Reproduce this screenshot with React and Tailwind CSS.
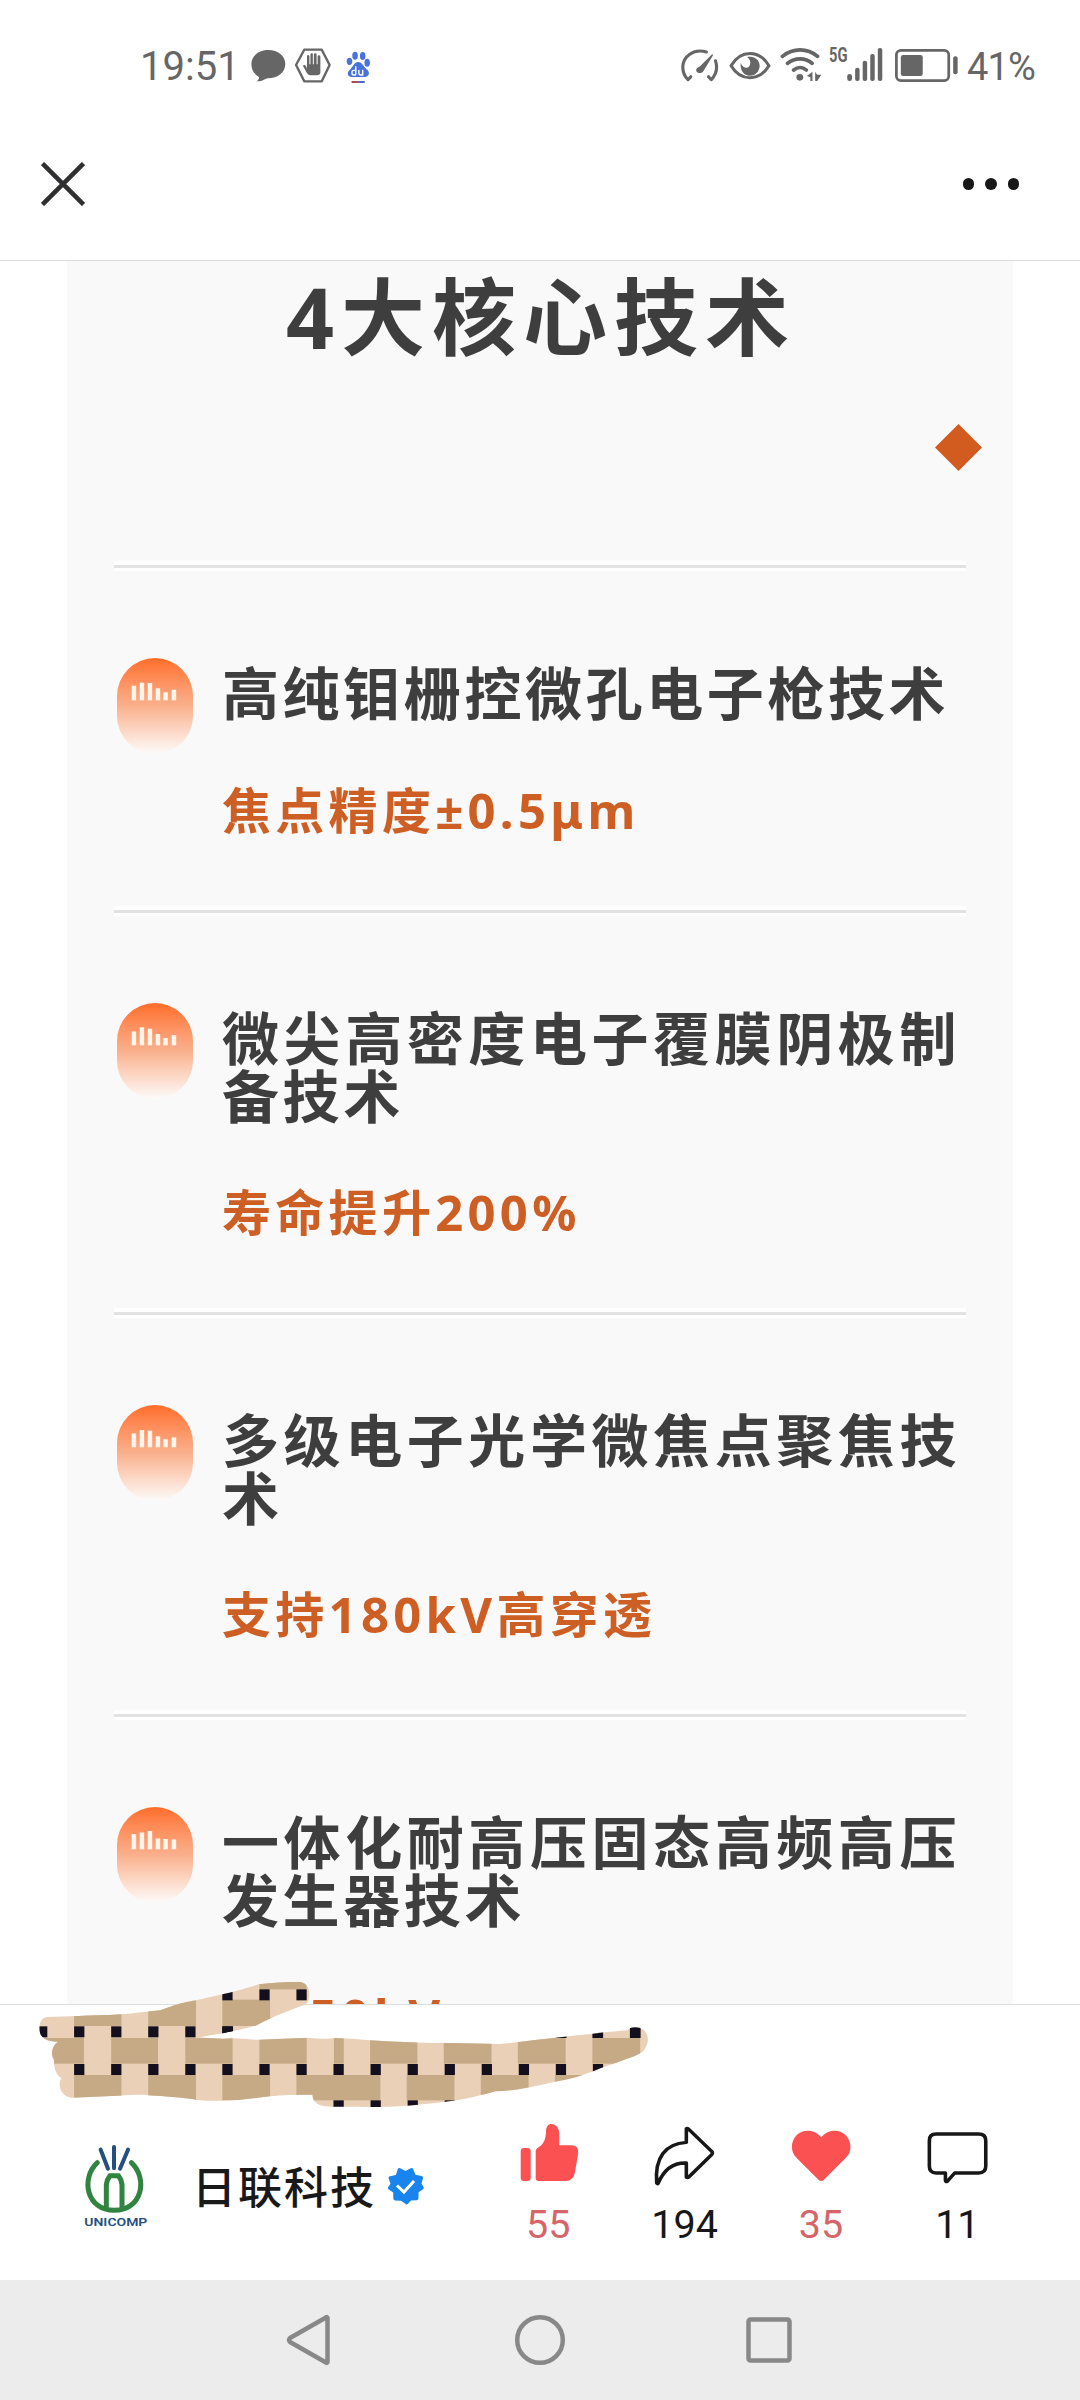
const techs = [
  {
    title: "高纯钼栅控微孔电子枪技术",
    note: "焦点精度±0.5μm",
    bars: [27.7, 24.7, 25, 30.3, 34.3, 31.7],
  },
  {
    title: "微尖高密度电子覆膜阴极制备技术",
    note: "寿命提升200%",
    bars: [28.5, 24.3, 25.7, 31, 35, 32],
  },
  {
    title: "多级电子光学微焦点聚焦技术",
    note: "支持180kV高穿透",
    bars: [28.3, 25, 25.7, 31.3, 34.3, 32.3],
  },
  {
    title: "一体化耐高压固态高频高压发生器技术",
    note: "50kV",
    indent: true,
    bars: [27, 25.5, 24, 31.5, 32, 32.5],
  },
];

const barX = [14.7, 22.7, 30.7, 38.7, 46.3, 54.7];

const StatusBar = () => (
  <div className="flex h-[130px] shrink-0 items-center justify-between pr-[43px] pl-[140px] text-[#666]">
    <div className="flex items-center">
      <span className="w-[110px] pt-[3px] font-['Roboto','Noto_Sans',sans-serif] text-[40px] leading-[40px] whitespace-nowrap">
        19:51
      </span>
      <svg className="h-10 w-[36px]" viewBox="725 135 105 120" preserveAspectRatio="none" fill="currentColor">
        <path d="M778 150c29 0 50 18 50 42 0 25-22 43-50 43-6 0-12 5-20 8-5 1-10 1-14 1 6-4 8-8 7-13-13-8-22-21-22-39 0-24 21-42 49-42z" />
      </svg>
      <svg className="ml-[9px] h-10 w-[36px]" viewBox="855 135 105 120" preserveAspectRatio="none">
        <path d="M882 149h51l23 46-23 49h-51l-24-49z" fill="none" stroke="currentColor" strokeWidth="7" strokeLinejoin="round" />
        <path
          d="M890 206v-37q0-4 3-4t4 4v24h3v-29q0-4 4-4t3 4v29h3v-29q0-4 4-4t4 4v29h3v-23q0-4 4-4t4 4v47q0 9-10 9h-19q-6 0-10-6l-12-23q4-5 9 1z"
          fill="currentColor"
        />
      </svg>
      <svg className="ml-[14px] h-10 w-[26px]" viewBox="1000 135 75 120" preserveAspectRatio="none">
        <g fill="#4a72dc">
          <ellipse cx="1013" cy="184" rx="8" ry="11" />
          <ellipse cx="1029" cy="167" rx="8" ry="12" />
          <ellipse cx="1051" cy="168" rx="8" ry="12" />
          <ellipse cx="1064" cy="188" rx="8" ry="12" />
          <path d="M1038 186c12 0 16 15 27 24 8 9 3 21-8 21h-38c-11 0-15-12-6-21 10-8 13-24 25-24z" />
        </g>
        <path d="M1031 199v26M1031 211h-6q-5 0-5 7t5 7h6M1040 210v10q0 5 5 5h6v-16" fill="none" stroke="#fff" strokeWidth="4" />
        <path d="M1019 246h20" stroke="#b04a52" strokeWidth="6" />
        <path d="M1038 246h19" stroke="#4a6cc0" strokeWidth="6" />
      </svg>
    </div>

    <div className="flex items-center">
      <svg className="h-10 w-[40px]" viewBox="405 135 115 120" preserveAspectRatio="none" fill="none" stroke="currentColor">
        <g strokeWidth="9" strokeLinecap="round" strokeLinejoin="round">
          <path d="M481 156C443 145 414 170 413 201c0 15 5 28 15 38l8-9" />
          <path d="M507 182c6 20 2 42-12 57l-8-9" />
        </g>
        <path d="M498 162l2 4-27 46c-4 9-18 10-21 1-2-7 4-12 9-13z" fill="currentColor" stroke="none" />
      </svg>
      <svg className="ml-[9px] h-10 w-[42px]" viewBox="548 135 122 120" preserveAspectRatio="none">
        <path d="M554 197c28-49 82-49 110 0-28 48-82 48-110 0z" fill="none" stroke="currentColor" strokeWidth="9" strokeLinejoin="round" />
        <path d="M601 171c22-5 36 10 36 26s-12 30-28 30c-17 0-30-16-27-39 5 15 17 19 24 12 6-6 6-20-5-29z" fill="currentColor" />
      </svg>
      <svg className="ml-[9px] h-10 w-[42px]" viewBox="695 135 123 120" preserveAspectRatio="none" fill="none" stroke="currentColor" strokeLinecap="round">
        <path d="M702 169c31-26 73-26 103 0M717 190c22-18 52-18 72 0M735 210c12-10 26-10 37 0" strokeWidth="11" />
        <circle cx="753" cy="232" r="10" fill="currentColor" stroke="none" />
        <path d="M774 228l16-13v28h-6v-11zM798 243v-28l6 9h12l-12 19z" fill="currentColor" stroke="none" />
      </svg>
      <div className="relative ml-[7px] h-10 w-[55px]">
        <span className="absolute -top-px left-0 origin-left scale-x-70 font-['Roboto',sans-serif] text-[21px] leading-[22px] font-bold">
          5G
        </span>
        <svg className="h-10 w-[55px]" viewBox="838 135 160 120" preserveAspectRatio="none" fill="currentColor">
          <rect x="891" y="222" width="14" height="21" rx="7" />
          <rect x="914" y="203" width="13" height="40" rx="6" />
          <rect x="936" y="182" width="13" height="61" rx="6" />
          <rect x="958" y="162" width="13" height="81" rx="6" />
          <rect x="980" y="144" width="13" height="99" rx="6" />
        </svg>
      </div>
      <svg className="ml-[10px] h-10 w-[65px]" viewBox="1028 135 190 120" preserveAspectRatio="none">
        <rect x="1035" y="151" width="153" height="91" rx="13" fill="none" stroke="currentColor" strokeWidth="8" />
        <rect x="1048" y="165" width="64" height="63" rx="7" fill="currentColor" />
        <rect x="1201" y="169" width="13" height="54" rx="6" fill="currentColor" />
      </svg>
      <span className="ml-[8px] w-[70px] pt-[3px] font-['Roboto','Noto_Sans',sans-serif] text-[38px] leading-[40px] tracking-[-0.8px] whitespace-nowrap">
        41%
      </span>
    </div>
  </div>
);

const TitleBar = () => (
  <div className="flex h-[130px] shrink-0 items-start justify-between pt-8 pr-[61px] pl-[41px]">
    <svg className="size-11" viewBox="0 0 44 44" stroke="#2f2f31" strokeWidth="4.5">
      <path d="M1.5 1.5l41 41M42.5 1.5l-41 41" />
    </svg>
    <div className="flex h-11 items-center gap-[11px]">
      <i className="size-[11.5px] rounded-full bg-[#181818]" />
      <i className="size-[11.5px] rounded-full bg-[#181818]" />
      <i className="size-[11.5px] rounded-full bg-[#181818]" />
    </div>
  </div>
);

const Badge = ({ bars }) => (
  <div className="h-24 w-[76px] shrink-0 rounded-[38px] bg-linear-to-b from-[#ff6d24] via-[#f9b08c] to-[#fcfbfa]">
    <svg className="h-24 w-[76px]" viewBox="0 0 76 96" fill="#fff5ea">
      {bars.map((top, i) => (
        <rect key={i} x={barX[i]} y={top} width="4.5" height={42.3 - top} />
      ))}
    </svg>
  </div>
);

const TechItem = ({ tech }) => (
  <section>
    <div className="flex h-2.5 flex-col justify-center bg-white">
      <div className="h-[3px] bg-[#e2e2e2]" />
    </div>
    <div className="flex pt-[87px] pb-[71px] pl-[3px]">
      <Badge bars={tech.bars} />
      <div className="ml-[29px] w-[738px] pt-1.5">
        <h2 className="min-h-[59px] text-justify text-[57px] leading-[58px] font-bold tracking-[3.6px] text-[#3e3e3e]">
          {tech.title}
        </h2>
        <p
          className={`mt-[62px] h-[50px] text-[49px] leading-[50px] font-bold tracking-[4.3px] whitespace-nowrap text-[#cd5e24] ${
            tech.indent ? "pl-[87px]" : ""
          }`}
        >
          {tech.note}
        </p>
      </div>
    </div>
  </section>
);

// [x, y, width, height] of the tan weave, everything else inside the stroke stays light
const tan = [
  [581, 50, 106, 38],
  [166, 119, 106, 79],
  [332, 119, 107, 79],
  [498, 119, 107, 79],
  [83, 234, 105, 77],
  [249, 234, 105, 77],
  [415, 234, 106, 77],
  [581, 234, 106, 77],
  [748, 234, 22, 77],
  [829, 234, 106, 77],
  [994, 234, 107, 77],
  [1160, 234, 107, 77],
  [1327, 234, 107, 77],
  [166, 345, 106, 76],
  [332, 345, 107, 76],
  [498, 345, 107, 76],
  [664, 345, 188, 76],
  [911, 345, 107, 76],
  [1077, 345, 107, 76],
  [1243, 345, 107, 76],
];
const squareRows = [
  { y: 88, from: 4, to: 6 },
  { y: 199, from: -1, to: 4 },
  { y: 312, from: 0, to: 14 },
  { y: 421, from: 7, to: 10 },
];

const Doodle = () => (
  <svg className="absolute top-[1960px] left-0 h-[170px] w-[700px]" viewBox="0 0 1568 510" preserveAspectRatio="none">
    <clipPath id="doodle">
      <path d="M105 171L160 169C200 165 270 166 300 159L358 151C380 143 395 130 440 121L498 103C540 90 555 82 580 73C610 67 640 66 670 65C685 68 692 80 693 100C693 120 690 130 680 136C650 150 620 165 575 196C540 210 490 222 447 232C470 235 500 238 520 235C550 236 560 240 580 239L690 233C700 235 740 238 750 234L790 236C850 244 930 248 1010 249L1120 252C1170 245 1220 236 1265 230C1320 222 1370 215 1405 211C1410 200 1430 198 1440 208C1455 225 1455 250 1440 275C1420 292 1390 302 1345 325C1300 350 1270 360 1243 365C1190 382 1150 392 1110 394C1060 412 1030 422 980 428C900 440 860 442 800 440L745 440C715 440 700 430 700 404C660 404 630 405 605 409C560 416 530 422 498 422C460 424 440 420 430 417C390 411 350 407 332 406C300 402 280 407 250 408L160 413C135 410 128 370 138 355C125 345 120 320 121 300C112 280 118 255 130 245C100 245 88 230 88 205C88 185 95 173 105 171Z" />
    </clipPath>
    <g clipPath="url(#doodle)">
      <rect width="1568" height="510" fill="#ead0b7" />
      {tan.map(([x, y, w, h]) => (
        <rect key={`${x}-${y}`} x={x} y={y} width={w} height={h} fill="#c5aa85" />
      ))}
      {squareRows.map(({ y, from, to }) =>
        Array.from({ length: to - from + 1 }, (_, i) => (
          <rect key={`${y}-${i}`} x={166 + (from + i) * 83} y={y} width="23" height="33" fill="#130f1c" />
        ))
      )}
      <rect x="498" y="199" width="24" height="35" fill="#130f1c" />
      <rect x="1245" y="199" width="24" height="35" fill="#130f1c" />
      <rect x="1411" y="199" width="24" height="35" fill="#130f1c" />
      <rect x="1327" y="199" width="24" height="35" fill="#130f1c" />
    </g>
  </svg>
);

const Logo = () => (
  <svg className="h-[85px] w-[65px]" viewBox="130 95 195 255" fill="none" strokeLinecap="round">
    <path d="M183 115l22 57M223 107v64M265 115l-24 57" stroke="#24507f" strokeWidth="12" />
    <path d="M173 154c-50 46-34 143 51 143s101-97 51-143" stroke="#31843f" strokeWidth="15" />
    <path d="M200 290v-70q2-16 11-27h25q9 11 11 27v70" stroke="#31843f" strokeWidth="15" strokeLinecap="butt" />
    <text x="134" y="343" textLength="189" lengthAdjust="spacingAndGlyphs" fill="#24507f" fontSize="34" fontWeight="600" fontFamily="Roboto, sans-serif">
      UNICOMP
    </text>
  </svg>
);

const actions = [
  {
    count: "55",
    color: "text-[#d4666a]",
    box: "0 60 382 204",
    icon: (
      <g fill="#fb5152">
        <rect x="114" y="144" width="28" height="99" rx="9" />
        <path d="M156 153q0-6 6-10c15-8 22-22 23-49 0-14 6-22 15-22 13 0 22 13 22 29v35h36q19 2 17 24l-9 57q-4 24-23 26h-79q-8 0-8-8z" />
      </g>
    ),
  },
  {
    count: "194",
    color: "text-[#171717]",
    box: "382 60 382 204",
    icon: (
      <path
        d="M579 86q4-2 7 2l64 66q4 5 0 10l-64 67q-3 3-7 1v-43c-44-2-66 28-79 61q-2 3-4-1c-6-78 25-118 83-122z"
        fill="none"
        stroke="#171717"
        strokeWidth="10"
        strokeLinejoin="round"
      />
    ),
  },
  {
    count: "35",
    color: "text-[#d4666a]",
    box: "764 60 382 204",
    icon: (
      <path d="M955 112c10-13 22-20 37-20 27 0 45 22 45 49 0 14-5 24-14 34l-61 65q-7 6-14 0l-61-65c-9-10-14-20-14-34 0-27 18-49 45-49 15 0 27 7 37 20z" fill="#fb5152" />
    ),
  },
  {
    count: "11",
    color: "text-[#171717]",
    box: "1146 60 382 204",
    icon: (
      <path
        d="M1278 102h119q20 0 20 20v77q0 20-20 20h-67l-21 25q-5 2-5-4v-21h-26q-19 0-19-20v-77q0-20 19-20z"
        fill="none"
        stroke="#171717"
        strokeWidth="10"
        strokeLinejoin="round"
      />
    ),
  },
];

const Footer = () => (
  <footer className="flex h-[276px] shrink-0 items-start border-t border-[#dedede] bg-white pl-[83px]">
    <div className="mt-[137px] flex h-[86px] w-[397px] items-center">
      <Logo />
      <span className="ml-[44px] w-[187px] font-['Noto_Sans_CJK_SC',sans-serif] text-[44px] leading-[44px] font-medium tracking-[2px] whitespace-nowrap text-[#191919]">
        日联科技
      </span>
      <svg className="mt-0.5 ml-[8px] h-[38px] w-[37px]" viewBox="0 0 37 38">
        <path
          d="M11 1.5q1-1 2.3-.2l5.2 2.7 5.2-2.7q1.3-.8 2.3.4l2.5 6 6 1.3q1.7.5 1.6 2l-1.6 5.5 2 3.5q.7 1.3-.5 2.3l-4.4 3-.1 6q0 1.6-1.6 2l-5.9.3-3.3 3.3q-1.3 1-2.3-.1l-4.4-3-6-.3q-1.7-.3-1.7-2l-.1-6-4.4-3q-1.4-1-.7-2.3l2.4-3.5-1.9-5.5q-.3-1.6 1.3-2l6-1.3z"
          fill="#1a84ee"
        />
        <path d="M10 18.5l7 6.5 10-11" fill="none" stroke="#fff" strokeWidth="3" />
      </svg>
    </div>
    {actions.map((action) => (
      <div key={action.count} className="mt-[115px] flex w-[136.4px] flex-col items-center">
        <svg className="h-[68px] w-full" viewBox={action.box} preserveAspectRatio="none">
          {action.icon}
        </svg>
        <span
          className={`mt-[17px] font-['Roboto','Noto_Sans',sans-serif] text-[39.5px] leading-[40px] ${action.color}`}
        >
          {action.count}
        </span>
      </div>
    ))}
  </footer>
);

const NavBar = () => (
  <nav className="flex h-[120px] shrink-0 items-center bg-[#ececec] pl-[286px]">
    <svg className="h-[52px] w-[46px]" viewBox="0 0 46 52" fill="none" stroke="#888" strokeWidth="4.5" strokeLinejoin="round">
      <path d="M41.5 4v44q-.5 1.5-1.5.5l-36-20.5q-2-2 0-4l36-20.5q1-1 1.5.5z" />
    </svg>
    <svg className="ml-[182px] h-[52px] w-[52px]" viewBox="0 0 52 52" fill="none" stroke="#888" strokeWidth="4.5">
      <circle cx="26" cy="26" r="22.8" />
    </svg>
    <svg className="ml-[179px] h-[48px] w-[48px]" viewBox="0 0 48 48" fill="none" stroke="#888" strokeWidth="4.5">
      <rect x="3.5" y="3.5" width="41" height="41" rx="2" />
    </svg>
  </nav>
);

export default function App() {
  return (
    <div
      lang="zh-CN"
      className="relative flex h-[2400px] w-[1080px] flex-col overflow-hidden bg-white font-['Noto_Sans','Noto_Sans_CJK_SC',sans-serif]"
    >
      <StatusBar />
      <TitleBar />
      <main className="h-[1744px] shrink-0 overflow-hidden border-t border-[#dedede]">
        <div className="ml-[67px] flex w-[946px] flex-col bg-[#f9f9f9] pt-3.5">
          <h1 className="pl-0.5 text-center text-[84px] leading-[84px] font-bold tracking-[7px] text-[#3e3e3e]">
            4大核心技术
          </h1>
          <svg className="mt-[65px] mr-[31px] size-[47px] self-end" viewBox="0 0 47 47">
            <path d="M23.5 0L47 23.5 23.5 47 0 23.5z" fill="#d25b1f" />
          </svg>
          <div className="mt-[90px] ml-[47px] w-[852px]">
            {techs.map((tech) => (
              <TechItem key={tech.title} tech={tech} />
            ))}
          </div>
        </div>
      </main>
      <Footer />
      <NavBar />
      <Doodle />
    </div>
  );
}
